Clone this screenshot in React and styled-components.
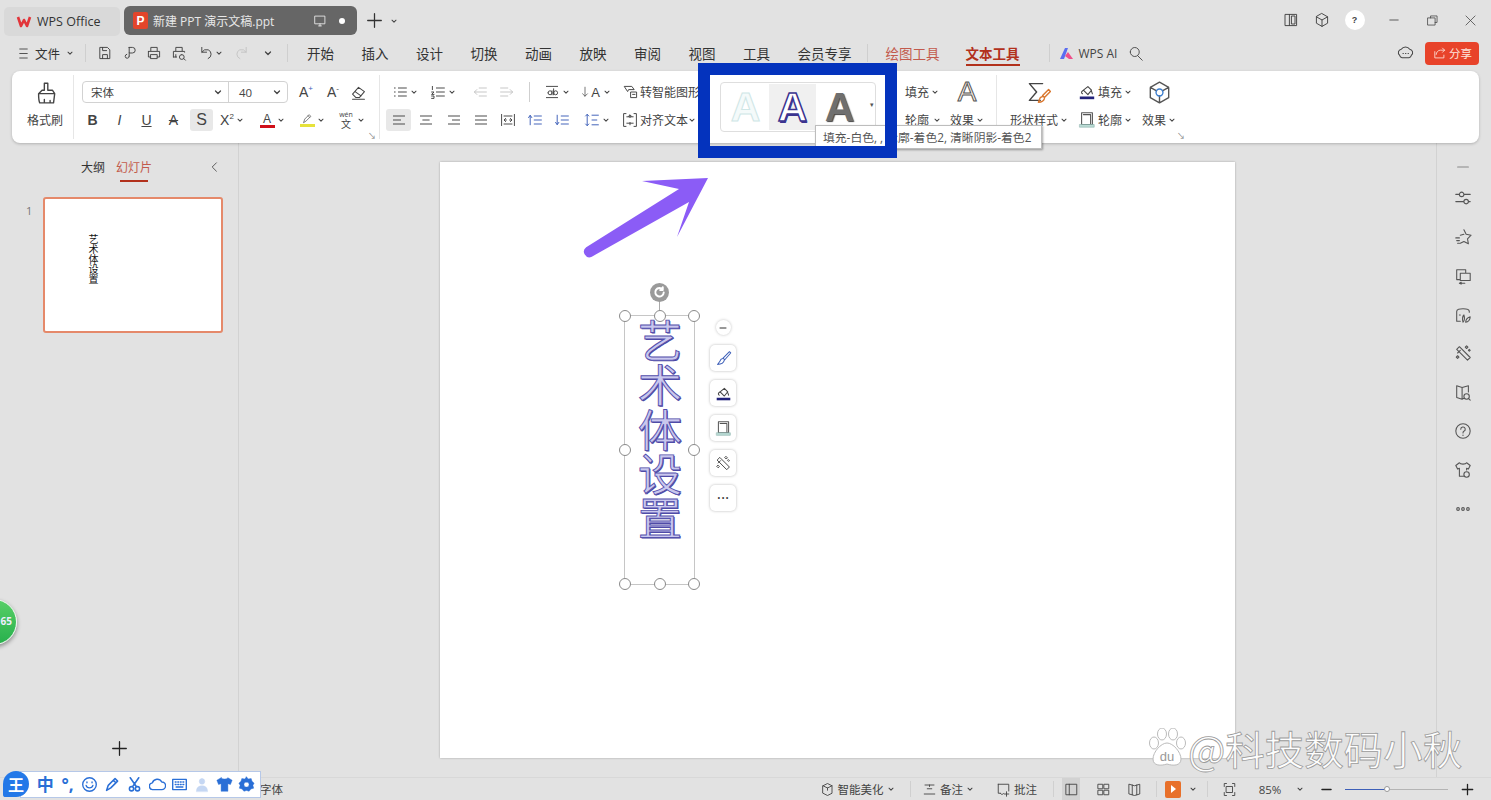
import React from "react";
import styled, { createGlobalStyle } from "styled-components";

const GlobalStyle = createGlobalStyle`
  html, body {
    margin: 0;
    padding: 0;
    overflow: hidden;
    background: #e2e2e2;
    font-family: "Open Sans", "Noto Sans CJK SC", sans-serif;
    color: #3a3a3a;
  }
  * { box-sizing: border-box; }
`;

const P = {
  menu: "M5 4h10M5 10h10M5 16h10",
  save: "M4 3h9l3 3v11H4zM7 3v4h5M7 17v-5h6v5",
  link: "M9 3h4a3.500 3.500 0 0 1 0 7H9V3zM9 10v4M9 14a2.500 2.500 0 1 1-3-2.400",
  print: "M6 7V3h8v4M3 8h14v7h-3M6 15H3V8M6 12h8v5H6z",
  preview: "M6 7V3h8v4M3 15V8h14v1M3 15h4M13.500 12a3 3 0 1 0 0 6 3 3 0 0 0 0-6M16 17l2 2M6 12v3",
  undo: "M6 3v6h6M6 9a7 7 0 0 1 8-3 6 6 0 0 1 0 11",
  redo: "M14 3v6H8M14 9a7 7 0 0 0-8-3 6 6 0 0 0 0 11",
  rotate: "M15 5.500a6.500 6.500 0 1 0 1.500 4.500M15 2v4h-4",
  chev: "M5 8l5 5 5-5",
  monitor: "M3 3h14v11H3zM8 17h4M10 14v3",
  plus: "M10 2v16M2 10h16",
  painter: "M9 2h3v6h4l2 3-1 8H5c-1-2-1-5-1-8l3-3h2zM4 11h14M9 19v-3M14 19v-2",
  eraser: "M3 12l7-8 7 5-6 7H7zM6 9l7 5M3 18h14",
  bullets: "M8 5h10M8 10h10M8 15h10M3 5h1M3 10h1M3 15h1",
  numbers: "M8 5h10M8 10h10M8 15h10M3 3v4M2 10h3l-3 3h3M2 15h3v3H2",
  outdent: "M9 5h9M9 15h9M3 10h15M6 7l-3 3 3 3",
  indent: "M2 5h9M2 15h9M2 10h15M14 7l3 3-3 3",
  alignL: "M3 5h14M3 10h9M3 15h14",
  alignC: "M3 5h14M6 10h8M3 15h14",
  alignR: "M3 5h14M8 10h9M3 15h14",
  alignJ: "M3 5h14M3 10h14M3 15h14",
  distribute: "M2 3v14M18 3v14M5 5h10M5 15h10M8 10H6M14 10h-2M7 8l-2 2 2 2M13 8l2 2-2 2",
  spaceUp: "M9 5h9M9 10h9M9 15h9M4 16V5M2 7l2-3 2 3",
  spaceDown: "M9 5h9M9 10h9M9 15h9M4 4v11M2 13l2 3 2-3",
  lineH: "M4 3v14M2 5l2-2 2 2M2 15l2 2 2-2M10 4h8M10 10h6M10 16h8",
  underAb: "M3 3h14M3 17h14M5 11a2.500 2.500 0 1 0 5 0 2.500 2.500 0 0 0-5 0M10 8.500v5M12 6v7.500M12 11a2.500 2.500 0 1 0 5 0 2.500 2.500 0 0 0-5 0",
  arrowDown: "M10 2v15M6 13l4 4 4-4",
  smart: "M2 3h9l3 4H7l-1 2zM10 10h7v7h-7zM12 13h3",
  alignText: "M5 2H2v16h3M15 2h3v16h-3M6 6h8M6 14h8M10 4v3M8 5.500l2-2 2 2M10 16v-3",
  sigma: "M13 3H2l6 7-6 7h9",
  bucket: "M6 8l5-4 4 4-4 5zM6 8c-2 1-3 3-1 4M15 9l1 3",
  hex: "M10 1l8 4.500v9L10 19l-8-4.500v-9zM10 13v6M2 5.500l5.500 3M18 5.500l-5.500 3",
  box: "M4 2h12v13H4zM6 4h8v11",
  phone: "M3 3h14v14H3zM8 3v14M11 5h4v10h-4z",
  cube: "M10 2l7 4v8l-7 4-7-4V6zM3 6l7 4 7-4M10 10v8",
  min: "M4 10h12",
  restore: "M7 6V3h10v10h-3M3 6h11v11H3z",
  close: "M3 3l14 14M17 3L3 17",
  search: "M3 8a6 6 0 1 0 12 0 6 6 0 0 0-12 0M13 13l6 6",
  cloudChat: "M3 12a4 4 0 0 1 2-7 6 6 0 0 1 10 0 4 4 0 0 1 2 7 4 4 0 0 1-3 3H6a4 4 0 0 1-3-3zM7 10h.5M10 10h.5M13 10h.5",
  shareArrow: "M15 3l3 3-3 3M18 6h-6a6 6 0 0 0-6 6M4 8v9h13v-4",
  back: "M12 4l-6 6 6 6",
  sliders: "M2 6h4M11 6h7M2 14h9M16 14h2M6 6a2.500 2.500 0 1 0 5 0 2.500 2.500 0 0 0-5 0M11 14a2.500 2.500 0 1 0 5 0 2.500 2.500 0 0 0-5 0",
  star: "M11 2l2.500 5 5.500 1-4 4 1 5.500-5-2.500-4 2M7 8l4-1M2 11h4M3 14h3M4 17h2",
  slidesCopy: "M3 3h10v3M3 3v11h3M7 7h11v8H7zM8 17l-2 1 2 1M6 18h6",
  plant: "M3 17V6c0-4 14-4 14 0v1M3 17h4M10 18c-1-4 0-7 1-8 1 3 1 6-1 8zM13 18c0-3 2-5 5-6 0 3-2 6-5 6zM6 10h1",
  magic: "M3 6l3-3 12 12-3 3zM7 7L4 10M14 2l1.500 1.500L14 5l-1.500-1.500zM17 6l1 1-1 1-1-1zM4 13l1.500 1.500L4 16l-1.500-1.500z",
  bookFind: "M3 3l6 2 7-2v7M3 3v13l6 2 2-1M9 5v13M14 12a3 3 0 1 0 0 6 3 3 0 0 0 0-6M16 17l2 2",
  help: "M2 10a8 8 0 1 0 16 0 8 8 0 0 0-16 0M7.500 8a2.500 2.500 0 1 1 3.500 2.300c-1 .5-1 1-1 2M10 14.500v.5",
  shirt: "M6 2L2 5l2 4 2-1v9h5M14 2l4 3-2 4-2-1v2M6 2c1 2 7 2 8 0M14 12a3 3 0 1 0 0 6 3 3 0 0 0 0-6",
  dots3: "M3 10a1.500 1.500 0 1 0 3 0 1.500 1.500 0 0 0-3 0M8.500 10a1.500 1.500 0 1 0 3 0 1.500 1.500 0 0 0-3 0M14 10a1.500 1.500 0 1 0 3 0 1.500 1.500 0 0 0-3 0",
  beautify: "M4 5l6-3 6 3v10l-6 3-6-3zM4 5l6 3 6-3M10 8v3",
  notes: "M4 4h12M7 9h6M3 16h14M10 4v2",
  comment: "M3 3h14v9M3 3v12h3M6 15l2 2 2-2M14 13v6M11 16h6",
  viewNormal: "M3 3h14v14H3zM7 3v14",
  viewGrid: "M3 3h6v6H3zM11 3h6v6h-6zM3 11h6v6H3zM11 11h6v6h-6z",
  viewBook: "M3 3l7 2 7-2v13l-7 2-7-2zM7 4v13M13 4v13",
  fit: "M6 2H3v4M14 2h3v4M6 18H3v-4M14 18h3v-4M6 6h8v8H6z",
  pen: "M3 17l2-6 8-8 3 3-8 8zM11 5l3 3",
  brush: "M17 2l1.500 1.500-7 8-2-2zM9 10a3.500 3.500 0 0 0-3 3l-3 4c4 0 7-1 8-5",
  smile: "M2 10a8 8 0 1 0 16 0 8 8 0 0 0-16 0M6 11c1 4 7 4 8 0M7 7v1M13 7v1",
  scissors: "M4 15a2.500 2.500 0 1 0 5 0 2.500 2.500 0 0 0-5 0M11 15a2.500 2.500 0 1 0 5 0 2.500 2.500 0 0 0-5 0M7.500 13L15 2M12.500 13L5 2",
  cloud: "M5 16a4 4 0 0 1-1-8 6 6 0 0 1 11-1 4.500 4.500 0 0 1 0 9z",
  keyboard: "M2 4h16v12H2zM5 7h1M8 7h1M11 7h1M14 7h1M5 10h1M8 10h1M11 10h1M14 10h1M6 13h8",
  person: "M10 2a3.500 3.500 0 1 0 0 7 3.500 3.500 0 0 0 0-7zM3 18c0-5 3-7 7-7s7 2 7 7z",
  tee: "M6 2L1 5l2 5 3-1v9h8V9l3 1 2-5-5-3c-1 2-7 2-8 0z",
  gear: "M10 1l2 2.500 3.500-.5 1 3.200L19 8.500 17.500 11l1 3.300-3.300 1L13 18l-3-1-3 1-2.200-2.700-3.300-1 1-3.300L1 8.500l2.500-2.300 1-3.200L8 3.500zM10 7a3 3 0 1 0 0 6 3 3 0 0 0 0-6z",
};

const Svg = styled.svg`
  flex: none;
  display: block;
  fill: ${(p) => p.$f || "none"};
  fill-rule: evenodd;
  stroke: ${(p) => p.$c || "#444"};
  stroke-width: ${(p) => p.$sw || 1.2};
  stroke-linecap: round;
  stroke-linejoin: round;
`;

const Ico = ({ d, s = 16, c, sw, f, children }) => (
  <Svg viewBox="0 0 20 20" width={s} height={s} $c={c} $sw={sw} $f={f}>
    <path d={P[d]} />
    {children}
  </Svg>
);

const Chev = ({ s = 8, c = "#444" }) => <Ico d="chev" s={s} c={c} sw={2.6} />;

const FillIcon = ({ s = 18 }) => (
  <Ico d="bucket" s={s} c="#444">
    <rect x="2" y="15" width="16" height="3" fill="#23237a" stroke="none" />
  </Ico>
);

const FrameIcon = ({ s = 18 }) => (
  <Ico d="box" s={s} c="#555">
    <rect x="2" y="15" width="16" height="3" fill="#bcdcd6" stroke="#7aa7a0" strokeWidth="0.6" />
  </Ico>
);

const SigmaIcon = () => (
  <Ico d="sigma" s={24}>
    <path d="M18 8l1.500 1.500-5 5-1.500-1.500zM12.500 14a2.500 2.500 0 0 0-2 2l-1 2.500c3 0 4.500-1 5-3" stroke="#d9772e" />
  </Ico>
);

const HexIcon = () => (
  <Ico d="hex" s={23} c="#555">
    <circle cx="10" cy="10" r="3" stroke="#3d7fd0" />
  </Ico>
);

const Page = styled.div`
  position: relative;
  width: 1491px;
  height: 800px;
  overflow: hidden;
  display: flex;
  flex-direction: column;
  background: #e2e2e2;
`;

/* title bar */
const TitleBar = styled.div`
  height: 40px;
  flex: none;
  display: flex;
  align-items: flex-start;
  padding: 6px 0 0 4px;
`;
const HomeTab = styled.div`
  width: 116px;
  height: 29px;
  margin-top: 1px;
  background: #d9d9d9;
  border-radius: 5px;
  display: flex;
  align-items: center;
  gap: 5px;
  padding-left: 12px;
  font-size: 12.500px;
  color: #333;
`;
const DocTab = styled.div`
  width: 233px;
  height: 29px;
  margin-left: 4px;
  background: #666666;
  border-radius: 6px;
  display: flex;
  align-items: center;
  padding: 0 9px;
  font-size: 12px;
  color: #e8e8e8;
`;
const DocBadge = styled.span`
  width: 15px;
  height: 17px;
  border-radius: 2px;
  margin-right: 5px;
  background: #e2452b;
  color: #fff;
  font: bold 12px "Liberation Sans", sans-serif;
  display: flex;
  align-items: center;
  justify-content: center;
`;
const DocName = styled.span`
  flex: 1;
  white-space: nowrap;
`;
const Dot = styled.span`
  width: 6px;
  height: 6px;
  border-radius: 50%;
  background: #fff;
  margin: 0 3px 0 12px;
`;
const TabPlus = styled.div`
  display: flex;
  align-items: center;
  gap: 7px;
  height: 29px;
  margin-left: 9px;
`;
const WinControls = styled.div`
  margin-left: auto;
  height: 28px;
  display: flex;
  align-items: center;
  padding-right: 1px;
`;
const WinSlot = styled.div`
  width: ${(p) => p.$w}px;
  display: flex;
  justify-content: center;
`;
const Avatar = styled.div`
  width: 20px;
  height: 20px;
  border-radius: 50%;
  background: #fff;
  color: #444;
  font: bold 9px "Liberation Sans", sans-serif;
  display: flex;
  align-items: center;
  justify-content: center;
`;

/* menu bar */
const MenuBar = styled.div`
  height: 31px;
  flex: none;
  display: flex;
  align-items: center;
  padding: 0 0 5px 16px;
  position: relative;
`;
const MenuText = styled.span`
  font-size: 12.500px;
  margin: 0 6px 0 4px;
  color: #333;
`;
const VLine = styled.span`
  width: 1px;
  height: ${(p) => p.$h || 18}px;
  background: #cfcfcf;
  flex: none;
  margin: 0 ${(p) => p.$m || 0}px 0 ${(p) => p.$ml ?? p.$m ?? 0}px;
`;
const Slot = styled.span`
  flex: none;
  width: ${(p) => p.$w}px;
  display: flex;
  align-items: center;
  justify-content: center;
  gap: ${(p) => p.$gap ?? 2}px;
`;
const TabList = styled.div`
  display: flex;
  gap: 28px;
  margin-left: 19px;
`;
const MenuTab = styled.span`
  font-size: 13.500px;
  width: ${(p) => (p.$long ? 53 : 26.5)}px;
  white-space: nowrap;
  color: ${(p) => p.$c || "#333"};
`;
const ContextTabs = styled.div`
  display: flex;
  gap: 27px;
  margin-left: 18px;
`;
const ActiveTab = styled.span`
  position: relative;
  font-size: 13.500px;
  font-weight: 700;
  color: #b2311c;
  white-space: nowrap;
  &::after {
    content: "";
    position: absolute;
    left: 0;
    right: 0;
    bottom: -3px;
    height: 2px;
    background: #b2311c;
  }
`;
const AiLabel = styled.span`
  font-size: 12px;
  margin: 0 11px 0 5px;
  color: #444;
`;
const MenuRight = styled.div`
  margin-left: auto;
  display: flex;
  align-items: center;
  gap: 11px;
  padding-right: 12px;
`;
const ShareButton = styled.div`
  width: 54px;
  height: 23px;
  background: #e8432a;
  border-radius: 4px;
  color: #fde3dc;
  font-size: 11.500px;
  display: flex;
  align-items: center;
  justify-content: center;
  gap: 3px;
`;

/* ribbon */
const Ribbon = styled.div`
  height: 72px;
  flex: none;
  margin: 0 12px;
  background: #fff;
  border-radius: 8px;
  box-shadow: 0 1px 3px rgba(0, 0, 0, 0.22);
  display: flex;
  position: relative;
  font-size: 12px;
  color: #444;
`;
const Group = styled.div`
  width: ${(p) => p.$w}px;
  flex: none;
  height: 64px;
  margin-top: 4px;
  padding: 3px 0 0 ${(p) => p.$pl || 0}px;
  border-right: 1px solid ${(p) => (p.$line ? "#e6e6e6" : "transparent")};
  position: relative;
  display: flex;
  flex-direction: ${(p) => (p.$row ? "row" : "column")};
`;
const Row = styled.div`
  height: 28px;
  display: flex;
  align-items: center;
  padding-left: ${(p) => p.$pl || 0}px;
  white-space: nowrap;
`;
const Stack = styled.div`
  width: ${(p) => p.$w}px;
  flex: none;
  display: flex;
  flex-direction: column;
  margin-left: ${(p) => p.$ml || 0}px;
`;
const Tall = styled.div`
  height: 28px;
  display: flex;
  align-items: center;
  justify-content: ${(p) => (p.$start ? "flex-start" : "center")};
  gap: 2px;
  white-space: nowrap;
`;
const Launcher = styled.span`
  position: absolute;
  right: ${(p) => p.$r || 3}px;
  bottom: -1px;
  font-size: 8px;
  line-height: 8px;
  color: #777;
`;
const FontPicker = styled.div`
  width: 206px;
  height: 22px;
  margin: 0 2px 0 8px;
  border: 1px solid #d2d2d2;
  border-radius: 4px;
  display: flex;
  align-items: center;
  font-size: 11.500px;
`;
const FontName = styled.div`
  width: 146px;
  height: 100%;
  padding: 0 5px 0 8px;
  border-right: 1px solid #d2d2d2;
  display: flex;
  align-items: center;
  justify-content: space-between;
`;
const FontSize = styled.div`
  flex: 1;
  padding: 0 5px 0 10px;
  display: flex;
  align-items: center;
  justify-content: space-between;
`;
const Btn = styled.span`
  flex: none;
  width: ${(p) => p.$w || 27}px;
  height: 22px;
  margin-left: ${(p) => p.$ml || 0}px;
  padding-left: ${(p) => p.$pl || 0}px;
  border-radius: 3px;
  display: flex;
  align-items: center;
  justify-content: center;
  gap: 2px;
  background: ${(p) => (p.$on ? "#e8e8e8" : "transparent")};
`;
const Letter = styled.span`
  font-family: "Liberation Sans", sans-serif;
  font-size: ${(p) => p.$size || 14}px;
  font-weight: ${(p) => (p.$bold ? 700 : 400)};
  font-style: ${(p) => (p.$italic ? "italic" : "normal")};
  text-decoration: ${(p) => p.$deco || "none"};
  color: #444;
`;
const ArrowA = styled.span`
  display: flex;
  align-items: center;
  gap: 0;
  margin-right: 1px;
`;
const Sup = styled.sup`
  font-size: 8px;
  line-height: 0;
  color: ${(p) => p.$c || "#444"};
`;
const ColorA = styled.span`
  width: 15px;
  font: 12px/12px "Liberation Sans", sans-serif;
  text-align: center;
  color: #444;
  border-bottom: 3px solid ${(p) => p.$c};
`;
const MarkerBar = styled.span`
  width: 15px;
  border-bottom: 3px solid #e6e23a;
  display: flex;
  justify-content: center;
`;
const PinYin = styled.span`
  width: 17px;
  font-size: 10px;
  line-height: 10px;
  text-align: center;
  & > small {
    display: block;
    font-size: 7px;
    line-height: 8px;
  }
`;
const OutlineA = styled.span`
  font: 400 28px/28px "Liberation Sans", sans-serif;
  color: #fdf1e6;
  -webkit-text-stroke: 1px #555;
`;
const Gallery = styled.div`
  width: 156px;
  height: 50px;
  margin-top: 4px;
  border: 1px solid #dedede;
  border-radius: 4px;
  display: flex;
  align-items: center;
  padding-left: 1px;
  position: relative;
`;
const Sample = styled.div`
  width: 47px;
  height: 46px;
  display: flex;
  align-items: center;
  justify-content: center;
  font: 700 41px/46px "Liberation Sans", sans-serif;
  background: ${(p) => (p.$on ? "#f0f0f0" : "transparent")};
  color: ${(p) => p.$fill};
  -webkit-text-stroke: ${(p) => p.$stroke || "0 transparent"};
  text-shadow: ${(p) => p.$shadow || "none"};
`;
const GalleryMore = styled.span`
  position: absolute;
  right: 1px;
  top: 17px;
  font-size: 7px;
  color: #555;
`;
const RedDot = styled.span`
  width: 4px;
  height: 4px;
  border-radius: 50%;
  background: #c4121a;
  margin: 6px 6px 0 8px;
`;
const TextIndent = styled.span`
  padding-left: 20px;
  display: flex;
  align-items: center;
  gap: 4px;
`;

/* work area */
const Work = styled.div`
  flex: 1;
  display: flex;
  min-height: 0;
`;
const Sidebar = styled.aside`
  width: 239px;
  flex: none;
  border-right: 1px solid #d2d2d2;
  display: flex;
  flex-direction: column;
`;
const SideTabs = styled.div`
  height: 36px;
  padding: 16px 0 0 81px;
  display: flex;
  font-size: 12px;
  color: #333;
`;
const SideTab = styled.span`
  position: relative;
  margin-right: 11px;
  line-height: 17px;
  color: ${(p) => (p.$on ? "#c25a4c" : "#333")};
  ${(p) =>
    p.$on
      ? `&::after {
    content: "";
    position: absolute;
    left: 4px;
    right: 4px;
    bottom: -3px;
    height: 2px;
    background: #b2311c;
  }`
      : ""}
`;
const SideBack = styled.span`
  margin: 1px 0 0 45px;
`;
const ThumbRow = styled.div`
  display: flex;
  margin-top: 18px;
  padding-left: 26px;
`;
const ThumbNo = styled.span`
  width: 17px;
  font-size: 11px;
  line-height: 28px;
  color: #777;
`;
const Thumb = styled.div`
  width: 180px;
  height: 136px;
  background: #fff;
  border: 2px solid #e5896a;
  border-radius: 3px;
  padding: 35px 0 0 42px;
`;
const ThumbText = styled.div`
  writing-mode: vertical-rl;
  text-orientation: upright;
  font-size: 10px;
  line-height: 11px;
  color: #111;
`;
const SideAdd = styled.div`
  margin-top: auto;
  padding: 0 0 20px 111px;
`;
const Canvas = styled.main`
  flex: 1;
  display: flex;
  justify-content: center;
  padding-top: 19px;
`;
const Slide = styled.div`
  position: relative;
  width: 795px;
  height: 596px;
  background: #fff;
  box-shadow: 0 0 2px rgba(0, 0, 0, 0.28);
`;
const ArrowMark = styled.svg`
  position: absolute;
  left: 140px;
  top: 12px;
`;
const Frame = styled.div`
  position: absolute;
  left: 184px;
  top: 153px;
  width: 71px;
  height: 270px;
  border: 1px solid #c6c6c6;
`;
const Art = styled.div`
  position: absolute;
  left: 13px;
  top: 3px;
  writing-mode: vertical-rl;
  text-orientation: upright;
  font: 400 44px/44px "Noto Sans CJK SC", sans-serif;
  letter-spacing: 0.4px;
  color: #c9c7ee;
  -webkit-text-stroke: 0.9px #5450ad;
  text-shadow: 1px 1px 0 #4a46a0;
  white-space: nowrap;
`;
const Handle = styled.span`
  position: absolute;
  left: ${(p) => p.$x}%;
  top: ${(p) => p.$y}%;
  width: 12px;
  height: 12px;
  margin: -6px 0 0 -6px;
  border-radius: 50%;
  background: #fff;
  border: 1px solid #8a8a8a;
`;
const RotateStem = styled.span`
  position: absolute;
  left: 34px;
  top: -16px;
  width: 1px;
  height: 14px;
  background: #aaa;
`;
const RotateKnob = styled.span`
  position: absolute;
  left: 25px;
  top: -33px;
  width: 19px;
  height: 19px;
  border-radius: 50%;
  background: #9a9a9a;
  display: flex;
  align-items: center;
  justify-content: center;
`;
const FloatBar = styled.div`
  position: absolute;
  left: 270px;
  top: 158px;
  display: flex;
  flex-direction: column;
  align-items: center;
  gap: 9px;
`;
const CollapseBtn = styled.span`
  width: 15px;
  height: 15px;
  border-radius: 50%;
  background: #fff;
  box-shadow: 0 0 3px rgba(0, 0, 0, 0.25);
  margin-bottom: 1px;
  display: flex;
  align-items: center;
  justify-content: center;
`;
const FloatBtn = styled.span`
  width: 26px;
  height: 26px;
  border-radius: 5px;
  background: #fff;
  box-shadow: 0 0 3px rgba(0, 0, 0, 0.28);
  display: flex;
  align-items: center;
  justify-content: center;
`;
const RightRail = styled.aside`
  width: 55px;
  flex: none;
  border-left: 1px solid #d2d2d2;
  display: flex;
  flex-direction: column;
  align-items: center;
  padding: 15px 2px 0 0;
  gap: 20.900px;
`;
const RailHead = styled.span`
  margin-bottom: -8px;
`;

/* status bar */
const StatusBar = styled.footer`
  height: 23px;
  flex: none;
  border-top: 1px solid #d8d8d8;
  display: flex;
  align-items: center;
  padding: 0 15px 0 260px;
  font-size: 11.500px;
  color: #444;
`;
const StatusRight = styled.div`
  margin-left: auto;
  display: flex;
  align-items: center;
  height: 100%;
`;
const StatusItem = styled.span`
  position: relative;
  flex: none;
  height: 100%;
  width: ${(p) => p.$w}px;
  margin-left: ${(p) => p.$ml || 0}px;
  display: flex;
  align-items: center;
  justify-content: center;
  gap: 3px;
  white-space: nowrap;
  background: ${(p) => (p.$on ? "#d2d2d2" : "transparent")};
  ${(p) =>
    p.$sep
      ? `&::before {
    content: "";
    position: absolute;
    left: -${p.$sep}px;
    top: 3px;
    bottom: 3px;
    width: 1px;
    background: #d0d0d0;
  }`
      : ""}
`;
const PlayButton = styled.span`
  width: 16px;
  height: 17px;
  border-radius: 2px;
  background: #e8702a;
  display: flex;
  align-items: center;
  justify-content: center;
  &::before {
    content: "";
    border-left: 5px solid #fff;
    border-top: 4px solid transparent;
    border-bottom: 4px solid transparent;
  }
`;
const Zoom = styled.span`
  position: relative;
  flex: none;
  width: 103px;
  height: 1px;
  margin-left: 5px;
  background: linear-gradient(90deg, #3d5fb8 0 41%, #b4b4b4 41% 100%);
`;
const ZoomKnob = styled.span`
  position: absolute;
  left: 39px;
  top: -3px;
  width: 6px;
  height: 6px;
  border-radius: 50%;
  background: #fff;
  border: 1px solid #999;
`;

/* things lying over the page */
const Callout = styled.div`
  position: absolute;
  left: 698px;
  top: 63px;
  width: 199px;
  height: 95px;
  border: 12.500px solid #0433bd;
  pointer-events: none;
`;
const Hint = styled.div`
  position: absolute;
  left: 815px;
  top: 125px;
  width: 227px;
  height: 24px;
  background: #fff;
  border: 1px solid #bdbdbd;
  box-shadow: 1px 1px 2px rgba(0, 0, 0, 0.35);
  padding-left: 7px;
  font-size: 11.800px;
  line-height: 22px;
  color: #555;
  white-space: nowrap;
`;
const ImeBar = styled.div`
  position: absolute;
  left: 20px;
  top: 771px;
  width: 241px;
  height: 27px;
  background: #fff;
  border: 1px solid #b6c8e8;
  display: flex;
  align-items: center;
  padding-left: 13px;
  color: #2a6fd6;
`;
const ImeSlot = styled.span`
  width: 22.400px;
  flex: none;
  display: flex;
  justify-content: center;
  font-size: 17px;
  font-weight: 700;
  line-height: 20px;
`;
const ImeLogo = styled.span`
  position: absolute;
  left: 3px;
  top: 771px;
  width: 26px;
  height: 26px;
  border-radius: 50% 50% 50% 10%;
  background: #2378e8;
  color: #fff;
  font-size: 16px;
  font-weight: 700;
  display: flex;
  align-items: center;
  justify-content: center;
`;
const Ball = styled.div`
  position: absolute;
  left: -29px;
  top: 599px;
  width: 46px;
  height: 46px;
  border-radius: 50%;
  border: 1px solid #eef7ee;
  background: linear-gradient(180deg, #58cf68, #27b04c);
  box-shadow: 0 2px 4px rgba(0, 0, 0, 0.4);
  color: #eef;
  font-size: 10px;
  font-weight: 700;
  line-height: 42px;
  text-align: right;
  padding-right: 4px;
`;
const Mark = styled.div`
  position: absolute;
  left: 1148px;
  top: 723px;
  display: flex;
  align-items: center;
  gap: 2px;
`;
const MarkText = styled.span`
  font: 400 39.500px/50px "Noto Sans CJK SC", sans-serif;
  color: rgba(255, 255, 255, 0.95);
  -webkit-text-stroke: 0.8px #9a9a9a;
  white-space: nowrap;
`;

const menuTabs = ["开始", "插入", "设计", "切换", "动画", "放映", "审阅", "视图", "工具"];
const handles = [
  [0, 0], [50, 0], [100, 0], [0, 50], [100, 50], [0, 100], [50, 100], [100, 100],
];
const railIcons = ["sliders", "star", "slidesCopy", "plant", "magic", "bookFind", "help", "shirt", "dots3"];
const BLUE = "#2a6fd6";

const Paw = () => (
  <svg width="38" height="40" viewBox="0 0 38 40">
    <g fill="#fff" stroke="#bbb" strokeWidth="1">
      <ellipse cx="6" cy="15" rx="4.500" ry="6" />
      <ellipse cx="14" cy="6" rx="4.500" ry="6" />
      <ellipse cx="25" cy="6" rx="4.500" ry="6" />
      <ellipse cx="33" cy="15" rx="4.500" ry="6" />
      <path d="M19 15c6 0 14 9 14 16 0 7-8 7-14 5-6 2-14 2-14-5 0-7 8-16 14-16z" />
    </g>
    <text x="19" y="33" textAnchor="middle" fontSize="13" fontFamily="Liberation Sans" fill="#999">du</text>
  </svg>
);

export default function App() {
  return (
    <Page>
      <GlobalStyle />

      <TitleBar>
        <HomeTab>
          <svg width="16" height="13" viewBox="0 0 16 13">
            <path d="M2 2l3 9 3-6 3 6 3-9" fill="none" stroke="#e2353a" strokeWidth="2.600" strokeLinejoin="round" />
          </svg>
          WPS Office
        </HomeTab>
        <DocTab>
          <DocBadge>P</DocBadge>
          <DocName>新建 PPT 演示文稿.ppt</DocName>
          <Ico d="monitor" s={14} c="#eee" />
          <Dot />
        </DocTab>
        <TabPlus>
          <Ico d="plus" s={17} c="#333" sw={1.5} />
          <Chev />
        </TabPlus>
        <WinControls>
          <WinSlot $w={35}><Ico d="phone" s={16} /></WinSlot>
          <WinSlot $w={27}><Ico d="cube" s={16} /></WinSlot>
          <WinSlot $w={39}><Avatar>?</Avatar></WinSlot>
          <WinSlot $w={39}><Ico d="min" s={14} /></WinSlot>
          <WinSlot $w={38}><Ico d="restore" s={13} /></WinSlot>
          <WinSlot $w={39}><Ico d="close" s={13} /></WinSlot>
        </WinControls>
      </TitleBar>

      <MenuBar>
        <Ico d="menu" s={15} />
        <MenuText>文件</MenuText>
        <Chev />
        <VLine $m={6} $ml={11} />
        <Slot $w={25}><Ico d="save" /></Slot>
        <Slot $w={25}><Ico d="link" /></Slot>
        <Slot $w={24}><Ico d="print" /></Slot>
        <Slot $w={25}><Ico d="preview" /></Slot>
        <Slot $w={38}><Ico d="undo" /><Chev /></Slot>
        <Slot $w={28}><Ico d="redo" c="#c4c4c4" /></Slot>
        <Slot $w={22}><Chev s={10} /></Slot>
        <VLine $ml={8} />
        <TabList>
          {menuTabs.map((t) => <MenuTab key={t}>{t}</MenuTab>)}
          <MenuTab $long>会员专享</MenuTab>
        </TabList>
        <VLine $ml={16} />
        <ContextTabs>
          <MenuTab $long $c="#c25a4c">绘图工具</MenuTab>
          <ActiveTab>文本工具</ActiveTab>
        </ContextTabs>
        <VLine $ml={29} $m={9} />
        <svg width="15" height="13" viewBox="0 0 15 13">
          <path d="M1 12L6 1h3L5 12z" fill="#5b6df0" />
          <path d="M6 9l3-4 5 7h-4z" fill="#ef4f8b" />
        </svg>
        <AiLabel>WPS AI</AiLabel>
        <Ico d="search" s={15} />
        <MenuRight>
          <Ico d="cloudChat" s={17} />
          <ShareButton><Ico d="shareArrow" s={14} c="#fde3dc" />分享</ShareButton>
        </MenuRight>
      </MenuBar>

      <Ribbon>
        <Group $w={62} $line $pl={5}>
          <Tall><Ico d="painter" s={23} /></Tall>
          <Tall>格式刷</Tall>
        </Group>

        <Group $w={306} $line>
          <Row>
            <FontPicker>
              <FontName>宋体<Chev s={10} /></FontName>
              <FontSize>40<Chev s={10} /></FontSize>
            </FontPicker>
            <Btn $w={32}><Letter>A<Sup $c="#3d5fb8">+</Sup></Letter></Btn>
            <Btn $w={22}><Letter>A<Sup>-</Sup></Letter></Btn>
            <Btn $w={28}><Ico d="eraser" s={17} /></Btn>
          </Row>
          <Row $pl={5}>
            <Btn><Letter $bold>B</Letter></Btn>
            <Btn><Letter $italic>I</Letter></Btn>
            <Btn><Letter $deco="underline">U</Letter></Btn>
            <Btn><Letter $deco="line-through">A</Letter></Btn>
            <Btn $w={23} $ml={3} $on><Letter $size={16}>S</Letter></Btn>
            <Btn $w={38}><Letter>X<Sup>2</Sup></Letter><Chev /></Btn>
            <Btn $w={42}><ColorA $c="#d0101a">A</ColorA><Chev /></Btn>
            <Btn $w={38}><MarkerBar><Ico d="pen" s={11} /></MarkerBar><Chev /></Btn>
            <Btn $w={40}><PinYin><small>wén</small>文</PinYin><Chev /></Btn>
          </Row>
          <Launcher>↘</Launcher>
        </Group>

        <Group $w={340}>
          <Row $pl={6}>
            <Btn $w={38}><Ico d="bullets" /><Chev /></Btn>
            <Btn $w={38}><Ico d="numbers" /><Chev /></Btn>
            <Btn $w={36}><Ico d="outdent" c="#c4c4c4" /></Btn>
            <Btn $w={18}><Ico d="indent" c="#c4c4c4" /></Btn>
            <VLine $ml={13} $m={0} $h={20} />
            <Btn $w={46} $pl={8}><Ico d="underAb" /><Chev /></Btn>
            <Btn $w={38}><ArrowA><Ico d="arrowDown" s={12} /><Letter $size={13}>A</Letter></ArrowA><Chev /></Btn>
            <Btn $w={26} $pl={8}><Ico d="smart" /></Btn>
            <span>转智能图形</span>
          </Row>
          <Row $pl={6}>
            <Btn $w={25} $on><Ico d="alignL" /></Btn>
            <Btn $w={29}><Ico d="alignC" /></Btn>
            <Btn><Ico d="alignR" /></Btn>
            <Btn><Ico d="alignJ" /></Btn>
            <Btn><Ico d="distribute" /></Btn>
            <Btn><Ico d="spaceUp" c="#3d5fb8" /></Btn>
            <Btn><Ico d="spaceDown" c="#3d5fb8" /></Btn>
            <Btn $w={44}><Ico d="lineH" c="#3d5fb8" /><Chev /></Btn>
            <Btn $w={21}><Ico d="alignText" /></Btn>
            <span>对齐文本</span>
            <Chev />
          </Row>
        </Group>

        <Group $w={165}>
          <Gallery>
            <Sample $fill="#f4fafa" $stroke="1px #cfe6e6">A</Sample>
            <Sample $on $fill="#ffffff" $stroke="1.500px #3b3490" $shadow="1px 2px 0 #3b3490">A</Sample>
            <Sample $fill="#6f6f6f" $shadow="1px 1px 1px #444">A</Sample>
            <GalleryMore>▾</GalleryMore>
          </Gallery>
        </Group>

        <Group $w={112} $row $line>
          <Stack $w={62}>
            <Tall $start><RedDot />填充<Chev /></Tall>
            <Tall $start><TextIndent>轮廓<Chev /></TextIndent></Tall>
          </Stack>
          <Stack $w={40}>
            <Tall><OutlineA>A</OutlineA></Tall>
            <Tall>效果<Chev /></Tall>
          </Stack>
        </Group>

        <Group $w={193} $row>
          <Stack $w={68} $ml={8}>
            <Tall><SigmaIcon /></Tall>
            <Tall>形状样式<Chev /></Tall>
          </Stack>
          <Stack $w={64}>
            <Tall><FillIcon />填充<Chev /></Tall>
            <Tall><FrameIcon />轮廓<Chev /></Tall>
          </Stack>
          <Stack $w={44}>
            <Tall><HexIcon /></Tall>
            <Tall>效果<Chev /></Tall>
          </Stack>
          <Launcher $r={4}>↘</Launcher>
        </Group>
      </Ribbon>

      <Work>
        <Sidebar>
          <SideTabs>
            <SideTab>大纲</SideTab>
            <SideTab $on>幻灯片</SideTab>
            <SideBack><Ico d="back" s={14} /></SideBack>
          </SideTabs>
          <ThumbRow>
            <ThumbNo>1</ThumbNo>
            <Thumb><ThumbText>艺术体设置</ThumbText></Thumb>
          </ThumbRow>
          <SideAdd><Ico d="plus" s={17} c="#222" sw={1.5} /></SideAdd>
        </Sidebar>

        <Canvas>
          <Slide>
            <ArrowMark width="130" height="90" viewBox="0 0 130 90">
              <path d="M128 4L62 7 99 15 6.200 73.300A5.500 5.500 0 0 0 11.800 82.700L109 28 97 63z" fill="#8b5cf6" />
            </ArrowMark>
            <Frame>
              <RotateStem />
              <RotateKnob>
                <Ico d="rotate" s={13} c="#fff" sw={3} />
              </RotateKnob>
              <Art>艺术体设置</Art>
              {handles.map(([x, y]) => <Handle key={`${x}-${y}`} $x={x} $y={y} />)}
            </Frame>
            <FloatBar>
              <CollapseBtn><Ico d="min" s={10} c="#333" sw={2} /></CollapseBtn>
              <FloatBtn><Ico d="brush" s={17} c="#3d5fb8" /></FloatBtn>
              <FloatBtn><FillIcon s={17} /></FloatBtn>
              <FloatBtn><FrameIcon s={17} /></FloatBtn>
              <FloatBtn><Ico d="magic" s={16} /></FloatBtn>
              <FloatBtn>···</FloatBtn>
            </FloatBar>
          </Slide>
        </Canvas>

        <RightRail>
          <RailHead><Ico d="min" s={18} c="#888" /></RailHead>
          {railIcons.map((d) => <Ico key={d} d={d} s={18} c="#555" />)}
        </RightRail>
      </Work>

      <StatusBar>
        <span>字体</span>
        <StatusRight>
          <StatusItem $w={78}><Ico d="beautify" s={15} />智能美化<Chev /></StatusItem>
          <VLine $ml={14} $m={11} $h={16} />
          <StatusItem $w={52}><Ico d="notes" s={15} />备注<Chev /></StatusItem>
          <StatusItem $w={41} $ml={22}><Ico d="comment" s={15} />批注</StatusItem>
          <StatusItem $w={18} $ml={25} $sep={9} $on><Ico d="viewNormal" s={15} /></StatusItem>
          <StatusItem $w={31} $ml={8}><Ico d="viewGrid" s={15} /></StatusItem>
          <StatusItem $w={31}><Ico d="viewBook" s={15} /></StatusItem>
          <StatusItem $w={24} $ml={11} $sep={5}><PlayButton /></StatusItem>
          <StatusItem $w={16}><Chev /></StatusItem>
          <StatusItem $w={30} $ml={13} $sep={7}><Ico d="fit" s={15} /></StatusItem>
          <StatusItem $w={40} $ml={6}>85%</StatusItem>
          <StatusItem $w={14} $ml={3}><Chev /></StatusItem>
          <StatusItem $w={28} $ml={5}><Ico d="min" s={15} c="#222" sw={2} /></StatusItem>
          <Zoom><ZoomKnob /></Zoom>
          <StatusItem $w={18} $ml={10}><Ico d="plus" s={13} c="#222" sw={2} /></StatusItem>
        </StatusRight>
      </StatusBar>

      <Hint>填充-白色, , 轮廓-着色2, 清晰阴影-着色2</Hint>
      <Callout />
      <Ball>65</Ball>
      <ImeBar>
        <ImeSlot>中</ImeSlot>
        <ImeSlot>°,</ImeSlot>
        <ImeSlot><Ico d="smile" s={17} c={BLUE} sw={1.6} /></ImeSlot>
        <ImeSlot><Ico d="pen" s={17} c={BLUE} sw={1.8} /></ImeSlot>
        <ImeSlot><Ico d="scissors" s={17} c={BLUE} sw={1.8} /></ImeSlot>
        <ImeSlot><Ico d="cloud" s={17} c={BLUE} sw={1.6} /></ImeSlot>
        <ImeSlot><Ico d="keyboard" s={17} c={BLUE} sw={1.6} /></ImeSlot>
        <ImeSlot><Ico d="person" s={16} c="#c5d7f3" f="#c5d7f3" sw={0.5} /></ImeSlot>
        <ImeSlot><Ico d="tee" s={17} c={BLUE} f={BLUE} sw={0.5} /></ImeSlot>
        <ImeSlot><Ico d="gear" s={17} c={BLUE} f={BLUE} sw={0.5} /></ImeSlot>
      </ImeBar>
      <ImeLogo>王</ImeLogo>
      <Mark>
        <Paw />
        <MarkText>@科技数码小秋</MarkText>
      </Mark>
    </Page>
  );
}
